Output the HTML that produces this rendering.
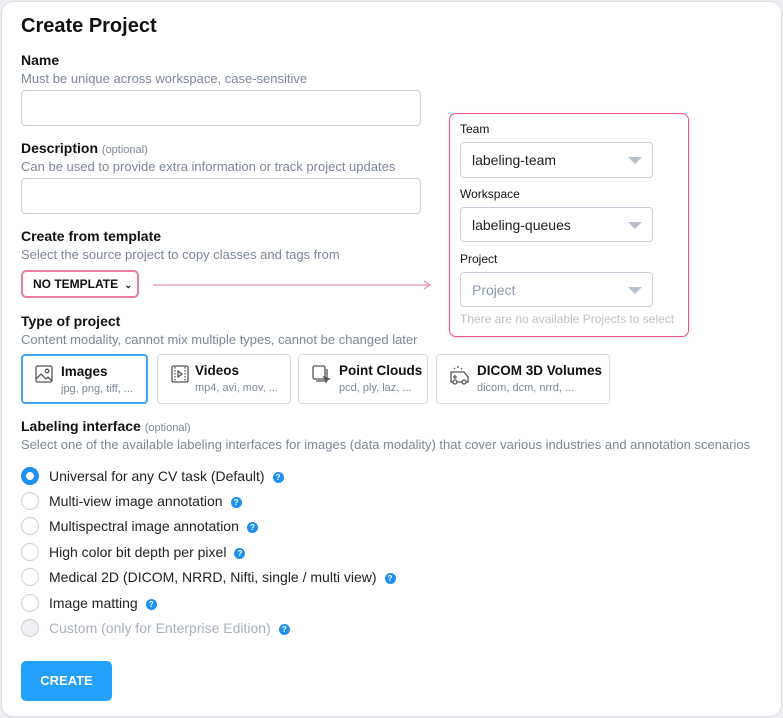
<!DOCTYPE html>
<html><head><style>
*{box-sizing:border-box;margin:0;padding:0}
body{width:783px;height:718px;background:#eceef1;font-family:"Liberation Sans",Arial,sans-serif;position:relative;overflow:hidden;color:#1a1a1a}
.card{position:absolute;left:1px;top:1px;width:781px;height:716px;background:#fff;border:1px solid #dcdfe4;border-radius:12px}
.a{position:absolute;white-space:nowrap}
.h{font-weight:bold;font-size:14px;color:#111}
.s{font-size:13px;color:#7d8796}
.opt{font-size:11px;font-weight:normal;color:#7d8796}
.in{position:absolute;border:1px solid #c9d0db;border-radius:4px;background:#fff}
.sel{position:absolute;border:1px solid #c9d0db;border-radius:4px;background:#fff;font-size:14px;color:#222;padding-left:11px;line-height:34px}
.sel:after{content:"";position:absolute;right:10px;top:14px;border-left:7px solid transparent;border-right:7px solid transparent;border-top:7px solid #b8c0cc}
.tc{position:absolute;top:354px;height:50px;border:1px solid #d6dbe2;border-radius:4px;background:#fff}
.tc b{position:absolute;top:8px;font-size:13.5px;color:#111}
.tc span{position:absolute;top:27px;font-size:11px;color:#7d8796;white-space:nowrap}
.tc svg{position:absolute;left:12px;top:9px}
.r{position:absolute;left:21px;width:18px;height:18px;border:1px solid #c9d0db;border-radius:50%;background:#fff}
.rt{position:absolute;left:49px;font-size:14px;color:#222;white-space:nowrap}
.q{display:inline-block;width:11px;height:11px;border-radius:50%;background:#1e90f0;color:#fff;font-size:8px;font-weight:bold;text-align:center;line-height:11px;margin-left:8px;vertical-align:1px}
</style></head><body>
<div class="card"></div>
<div class="a" style="left:21px;top:15px;font-size:20px;font-weight:bold;color:#111">Create Project</div>
<div class="a h" style="left:21px;top:52px">Name</div>
<div class="a s" style="left:21px;top:71px">Must be unique across workspace, case-sensitive</div>
<div class="in" style="left:21px;top:90px;width:400px;height:36px"></div>
<div class="a h" style="left:21px;top:140px">Description <span class="opt">(optional)</span></div>
<div class="a s" style="left:21px;top:159px">Can be used to provide extra information or track project updates</div>
<div class="in" style="left:21px;top:178px;width:400px;height:36px"></div>
<div class="a h" style="left:21px;top:228px">Create from template</div>
<div class="a s" style="left:21px;top:247px">Select the source project to copy classes and tags from</div>
<div class="a" style="left:21px;top:270px;width:118px;height:28px;border:2px solid #ef7fa0;border-radius:5px;font-size:12px;font-weight:bold;color:#111;line-height:24px;padding-left:10px">NO TEMPLATE <span style="font-size:9px;margin-left:3px">&#8964;</span></div>
<svg class="a" style="left:152px;top:279px" width="282" height="12"><line x1="1" y1="6" x2="278" y2="6" stroke="#f090ab" stroke-width="1.3"/><polyline points="272,2 278,6 272,10" fill="none" stroke="#f090ab" stroke-width="1.3"/></svg>
<div class="a h" style="left:21px;top:313px">Type of project</div>
<div class="a s" style="left:21px;top:332px">Content modality, cannot mix multiple types, cannot be changed later</div>
<div class="tc" style="left:21px;width:127px;border:2px solid #42a5f5"><svg width="20" height="20" viewBox="0 0 20 20" fill="none" stroke="#555" stroke-width="1.3" style="left:11px;top:8px"><rect x="2" y="2" width="16" height="16" rx="1.5"/><circle cx="13" cy="7" r="1.8"/><path d="M2 15l5-5 5 5 2-2 4 4"/></svg><b style="left:38px">Images</b><span style="left:38px">jpg, png, tiff, ...</span></div>
<div class="tc" style="left:157px;width:134px"><svg width="20" height="20" viewBox="0 0 20 20" fill="none" stroke="#555" stroke-width="1.3"><rect x="2" y="2" width="16" height="16" rx="1.5"/><path d="M5 3v14M15 3v14" stroke-dasharray="1.5 1.5"/><path d="M8 7l4 3-4 3z"/></svg><b style="left:37px">Videos</b><span style="left:37px">mp4, avi, mov, ...</span></div>
<div class="tc" style="left:298px;width:130px"><svg width="20" height="20" viewBox="0 0 20 20" fill="none" stroke="#555" stroke-width="1.3"><rect x="2" y="2" width="12" height="13" rx="1.5"/><path d="M5 17h9a2 2 0 0 0 2-2V5"/><path d="M13 13l5 2-2 1-1 2z" fill="#555"/></svg><b style="left:40px">Point Clouds</b><span style="left:40px">pcd, ply, laz, ...</span></div>
<div class="tc" style="left:436px;width:174px"><svg width="22" height="22" viewBox="0 0 22 22" fill="none" stroke="#555" stroke-width="1.3"><path d="M2 8h13l4 5v5H2z"/><circle cx="6" cy="18" r="2" fill="#fff"/><circle cx="15" cy="18" r="2" fill="#fff"/><path d="M6 11v4M4 13h4M9 4v-2M6 5l-1-1M12 5l1-1"/></svg><b style="left:40px">DICOM 3D Volumes</b><span style="left:40px">dicom, dcm, nrrd, ...</span></div>
<div class="a h" style="left:21px;top:418px">Labeling interface <span class="opt">(optional)</span></div>
<div class="a s" style="left:21px;top:437px">Select one of the available labeling interfaces for images (data modality) that cover various industries and annotation scenarios</div>
<div class="r" style="top:467px;border:5px solid #1e90f0"></div><div class="rt" style="top:468px">Universal for any CV task (Default)<span class="q">?</span></div>
<div class="r" style="top:492px"></div><div class="rt" style="top:493px">Multi-view image annotation<span class="q">?</span></div>
<div class="r" style="top:517px"></div><div class="rt" style="top:518px">Multispectral image annotation<span class="q">?</span></div>
<div class="r" style="top:543px"></div><div class="rt" style="top:544px">High color bit depth per pixel<span class="q">?</span></div>
<div class="r" style="top:568px"></div><div class="rt" style="top:569px">Medical 2D (DICOM, NRRD, Nifti, single / multi view)<span class="q">?</span></div>
<div class="r" style="top:594px"></div><div class="rt" style="top:595px">Image matting<span class="q">?</span></div>
<div class="r" style="top:619px;background:#eef0f3"></div><div class="rt" style="top:620px;color:#aab0b9">Custom (only for Enterprise Edition)<span class="q">?</span></div>
<div class="a" style="left:21px;top:661px;width:91px;height:40px;background:#22a0fb;border-radius:5px;color:#fff;font-size:13px;font-weight:bold;text-align:center;line-height:40px">CREATE</div>
<div class="a" style="left:449px;top:113px;width:240px;height:224px;border:1.5px solid #ee5585;border-radius:7px;background:#fff;box-shadow:0 1px 3px rgba(0,0,0,.12)"></div>
<div class="a" style="left:460px;top:122px;font-size:12px;color:#111">Team</div>
<div class="sel" style="left:460px;top:142px;width:193px;height:36px">labeling-team</div>
<div class="a" style="left:460px;top:187px;font-size:12px;color:#111">Workspace</div>
<div class="sel" style="left:460px;top:207px;width:193px;height:35px">labeling-queues</div>
<div class="a" style="left:460px;top:252px;font-size:12px;color:#111">Project</div>
<div class="sel" style="left:460px;top:272px;width:193px;height:35px;color:#8b9bb5">Project</div>
<div class="a" style="left:460px;top:312px;font-size:12px;color:#bcc1c8">There are no available Projects to select</div>
</body></html>
